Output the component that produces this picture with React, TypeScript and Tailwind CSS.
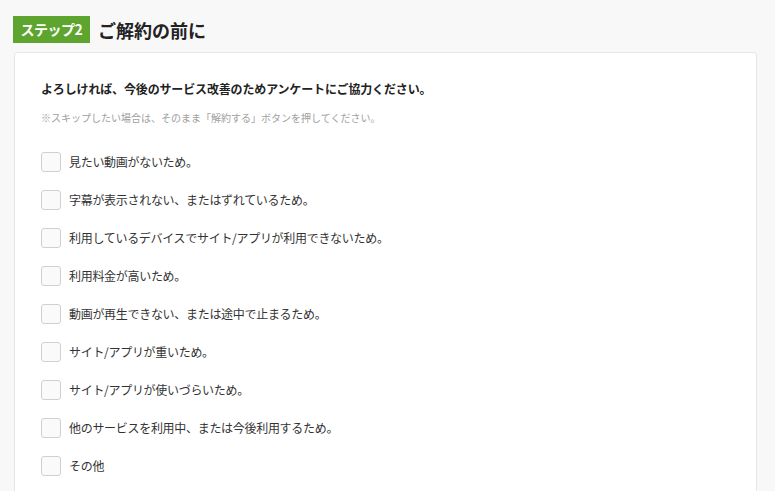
const REASONS = [
  "見たい動画がないため。",
  "字幕が表示されない、またはずれているため。",
  "利用しているデバイスでサイト/アプリが利用できないため。",
  "利用料金が高いため。",
  "動画が再生できない、または途中で止まるため。",
  "サイト/アプリが重いため。",
  "サイト/アプリが使いづらいため。",
  "他のサービスを利用中、または今後利用するため。",
  "その他",
];

export default function App() {
  return (
    <div
      className="min-h-[491px] bg-[#f8f8f8] pl-[13px] pt-[16px] text-[#333]"
      style={{ fontFamily: '"Noto Sans CJK JP", "Noto Sans", sans-serif' }}
    >
      <div className="flex items-center">
        <span className="flex h-[27px] w-[77px] items-center justify-center bg-[#5da52f] text-[14px] font-bold tracking-[-0.5px] text-white">
          ステップ2
        </span>
        <h1 className="ml-[8px] text-[18px] leading-none font-bold text-[#222]">ご解約の前に</h1>
      </div>

      <div className="mt-[9px] ml-px w-[743px] rounded-[3px] border border-[#e6e6e6] bg-white px-[26px] pt-[27px] pb-8">
        <p className="text-[12px] leading-[18px] font-bold tracking-[-0.15px] text-[#222]">
          よろしければ、今後のサービス改善のためアンケートにご協力ください。
        </p>
        <p className="mt-[12px] text-[10px] leading-[15px] text-[#a0a0a0]">
          ※スキップしたい場合は、そのまま「解約する」ボタンを押してください。
        </p>

        <ul className="mt-[27px] flex flex-col gap-[18px]">
          {REASONS.map((reason) => (
            <li key={reason}>
              <label className="flex cursor-pointer items-center gap-[8px]">
                <input type="checkbox" className="peer sr-only" />
                <span className="h-[20px] w-[20px] shrink-0 rounded-[3px] border border-[#d0d0d0] bg-[#fafafa]" />
                <span className="text-[12px] leading-[20px] tracking-[-0.3px] text-[#333]">{reason}</span>
              </label>
            </li>
          ))}
        </ul>
      </div>
    </div>
  );
}
